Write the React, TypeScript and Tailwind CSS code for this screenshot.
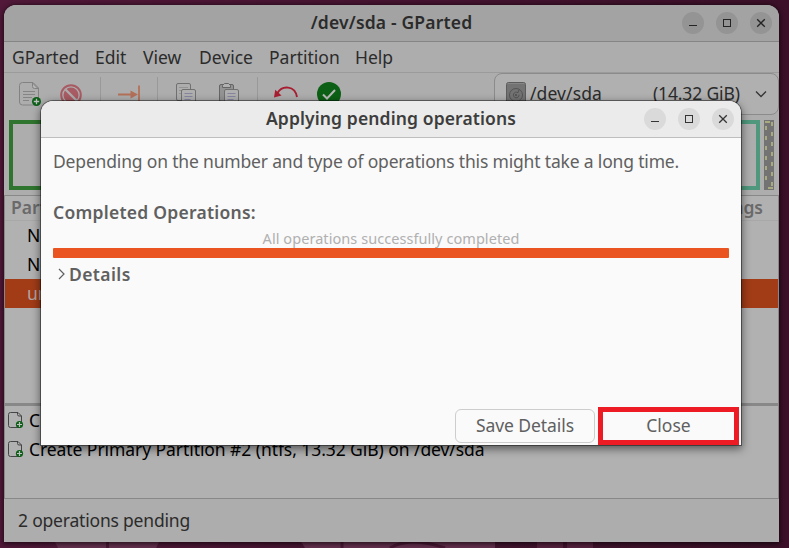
import type { ReactNode } from "react";

function WindowControls({ dim }: { dim?: boolean }) {
  const circle = `flex h-[22px] w-[22px] items-center justify-center rounded-full ${dim ? "bg-[#949494]" : "bg-[#dadada]"}`;
  const stroke = dim ? "#242424" : "#343434";
  return (
    <div className="flex gap-3">
      <div className={circle}>
        <svg width="10" height="10" viewBox="0 0 10 10" shapeRendering="crispEdges">
          <path d="M1 7.5h8" stroke={stroke} />
        </svg>
      </div>
      <div className={circle}>
        <svg width="10" height="10" viewBox="0 0 10 10" shapeRendering="crispEdges">
          <rect x="1.5" y="1.5" width="7" height="7" fill="none" stroke={stroke} />
        </svg>
      </div>
      <div className={circle}>
        <svg width="10" height="10" viewBox="0 0 10 10">
          <path d="M1.2 1.2l7.6 7.6M8.8 1.2L1.2 8.8" stroke={stroke} strokeWidth="1.3" />
        </svg>
      </div>
    </div>
  );
}

function NewIcon() {
  return (
    <svg width="24" height="26" viewBox="0 0 24 26" fill="none">
      <path d="M3.5.5H14l5.500 5.500V20a3 3 0 0 1-3 3h-13a3 3 0 0 1-3-3V3.500a3 3 0 0 1 3-3z" stroke="#828282" />
      <path d="M13.500 1v3.500a2 2 0 0 0 2 2H19z" fill="#b5b5b5" stroke="#828282" />
      <path d="M4 9.500h12M4 12.500h12M4 15.500h9M4 18.500h6" stroke="#858585" />
      <circle cx="17.500" cy="19.500" r="4.500" fill="#0c5f17" />
      <path d="M14.800 19.500h5.400M17.500 16.800v5.400" stroke="#c0c0c0" strokeWidth="1.300" />
    </svg>
  );
}

function SmallNewIcon() {
  return (
    <svg width="16" height="17" viewBox="0 0 16 17" fill="none" className="shrink-0">
      <path d="M2.500.5H10l3.500 3.500V13.500a2 2 0 0 1-2 2h-9a2 2 0 0 1-2-2v-11a2 2 0 0 1 2-2z" stroke="#454545" />
      <path d="M9.500.5v2a1.500 1.500 0 0 0 1.500 1.500h2.500" stroke="#454545" />
      <circle cx="11.500" cy="12.500" r="3.600" fill="#0c5f17" />
      <path d="M9 12.500h5M11.500 10v5" stroke="#c0c0c0" strokeWidth="1.200" />
    </svg>
  );
}

function DeleteIcon() {
  return (
    <svg width="22" height="22" viewBox="0 0 22 22" fill="none">
      <circle cx="11" cy="11" r="9.800" stroke="#a95b63" strokeWidth="2" />
      <circle cx="11" cy="11" r="7.500" fill="#a95b63" />
      <path d="M5.500 5.500l11 11" stroke="#adadad" strokeWidth="2.300" />
    </svg>
  );
}

function ResizeIcon() {
  return (
    <svg width="22" height="18" viewBox="0 0 22 18" fill="none">
      <path d="M0 9.500h14M21 .5v17" stroke="#b37059" strokeWidth="1.800" />
      <path d="M12.500 5.500l7.500 4-7.500 4z" fill="#b37059" />
    </svg>
  );
}

function CopyIcon() {
  return (
    <svg width="20" height="22" viewBox="0 0 20 22" fill="none">
      <rect x=".5" y=".5" width="14" height="17" rx="1.500" stroke="#707070" />
      <path d="M3 4.500h9M3 7.500h9M3 10.500h5" stroke="#949494" />
      <rect x="5.500" y="6.500" width="14" height="15" rx="1.500" fill="#afafaf" stroke="#707070" />
      <path d="M8.500 10.500h8M8.500 13.500h8M8.500 16.500h6" stroke="#8585a0" />
    </svg>
  );
}

function PasteIcon() {
  return (
    <svg width="20" height="22" viewBox="0 0 20 22" fill="none">
      <rect x=".5" y="1.500" width="14" height="17" rx="1.500" fill="#939393" stroke="#656565" />
      <path d="M3.500 4.500v-2l2-2h4l2 2v2z" fill="#b0b0b0" stroke="#656565" />
      <rect x="5.500" y="6.500" width="14" height="15" rx="1.500" fill="#afafaf" stroke="#707070" />
      <path d="M8.500 10.500h8M8.500 13.500h8M8.500 16.500h6" stroke="#8585a0" />
    </svg>
  );
}

function UndoIcon() {
  return (
    <svg width="25" height="13" viewBox="0 0 25 13" fill="none">
      <path d="M3.500 7C8-1 21-.8 23 11" stroke="#a91d31" strokeWidth="1.900" />
      <path d="M0 11.500L1.200 3.800 7.500 9.500z" fill="#a91d31" />
    </svg>
  );
}

function ApplyIcon() {
  return (
    <svg width="24" height="24" viewBox="0 0 24 24" fill="none">
      <circle cx="12" cy="12" r="12" fill="#0c6015" />
      <path d="M6 12.500l4 4 8-8.500" stroke="#b8b8b8" strokeWidth="2" />
    </svg>
  );
}

function DiskIcon() {
  return (
    <svg width="20" height="24" viewBox="0 0 20 24" fill="none">
      <rect x=".5" y=".5" width="19" height="23" rx="2" fill="#737373" stroke="#5c5c5c" />
      <path d="M1.500 1.500h17" stroke="#858585" />
      <circle cx="10" cy="13" r="6.500" stroke="#545454" />
      <path d="M13 7.500l-1 3.300a2.800 2.800 0 1 0 1 1.800" stroke="#545454" />
      <circle cx="10" cy="13" r="1" fill="#4c4c4c" />
    </svg>
  );
}

const Separator = () => <div className="h-9 w-px bg-[#999999]" />;

function PartitionRow({ children }: { children: ReactNode }) {
  return <div className="flex h-[29px] items-center pb-[2px] pl-[22px] text-[17.5px] leading-5 text-black">{children}</div>;
}

function PendingRow({ children }: { children: ReactNode }) {
  return (
    <div className="flex h-[29px] items-center gap-[5px] pl-[3px] text-black">
      <SmallNewIcon />
      <span className="whitespace-nowrap text-[17.5px] tracking-[-0.07px]">{children}</span>
    </div>
  );
}

function MainWindow() {
  return (
    <div className="flex h-[537px] w-[775px] flex-col overflow-hidden rounded-t-[12px] bg-[#adadad] text-[#2b2b2b] shadow-[0_1px_5px_1px_rgba(0,0,0,0.6)]">
      <header className="grid h-[37px] shrink-0 grid-cols-[1fr_auto_1fr] items-center border-b border-[#858585] bg-[#a3a3a3]">
        <div />
        <h1 className="pb-px text-[17.5px] font-semibold tracking-[0.17px]">/dev/sda - GParted</h1>
        <div className="flex justify-end pr-[7px]"><WindowControls dim /></div>
      </header>
      <nav className="flex h-[31px] shrink-0 items-center border-b border-[#9b9b9b] pl-2 text-[17.5px]">
        <span className="w-[83px]">GParted</span>
        <span className="w-[48px]">Edit</span>
        <span className="w-[56px]">View</span>
        <span className="w-[70px]">Device</span>
        <span className="w-[86px]">Partition</span>
        <span>Help</span>
      </nav>
      <div className="flex h-[42px] shrink-0">
        <div className="flex flex-1 items-start pl-[15px] pt-1">
          <div className="w-[41px] pt-[5px]"><NewIcon /></div>
          <div className="w-[40px] pt-[7px]"><DeleteIcon /></div>
          <Separator />
          <div className="w-[56px] pl-[17px] pt-2"><ResizeIcon /></div>
          <Separator />
          <div className="w-[61px] pl-[18px] pt-[6px]"><CopyIcon /></div>
          <div className="w-[38px] pt-[6px]"><PasteIcon /></div>
          <Separator />
          <div className="w-[59px] pl-4 pt-[9px]"><UndoIcon /></div>
          <div className="pt-[5px]"><ApplyIcon /></div>
        </div>
        <div className="flex w-[285px] items-center rounded-lg border border-[#8b8b8b] bg-[#b0b0b0] pl-[11px] pr-[11px] text-[17.5px]">
          <DiskIcon />
          <span className="w-[127px] pb-[2px] pl-1 tracking-[0.1px]">/dev/sda</span>
          <span className="flex-1 whitespace-nowrap pb-[2px] tracking-[-0.15px]">(14.32 GiB)</span>
          <svg width="12" height="8" viewBox="0 0 12 8" fill="none"><path d="M1 1.500l5 5 5-5" stroke="#343434" strokeWidth="1.300" /></svg>
        </div>
      </div>
      <div className="flex h-[80px] shrink-0 gap-1 px-[5px] py-[5px]">
        <div className="w-[55px] border-4 border-[#2f752f]" />
        <div className="flex-1 border-4 border-[#4f987e]" />
        <svg width="10" height="70" viewBox="0 0 10 70" shapeRendering="crispEdges">
          <rect width="10" height="70" fill="#737373" />
          <path d="M2 6V66M8 2V66" stroke="#aaaa7f" strokeWidth="2" strokeDasharray="4 6" />
          <path d="M1 1.500h5M4 68h5" stroke="#aaaa7f" strokeWidth="2" />
        </svg>
      </div>
      <section className="flex h-[208px] shrink-0 flex-col border border-b-0 border-[#888888] bg-[#b1b1b1]">
        <div className="flex h-[25px] items-center justify-between border-b border-[#a8a8a8] pb-[2px] pl-[6px] pr-[15px] text-[17.5px] font-semibold leading-5 text-[#6a6a6a]">
          <span>Partition</span>
          <span>Flags</span>
        </div>
        <PartitionRow>New Partition #1</PartitionRow>
        <PartitionRow>New Partition #2</PartitionRow>
        <div className="flex h-[29px] items-center bg-[#a23c17] pb-px pl-[22px] text-[17.5px] leading-5 text-[#b3a5a0]">unallocated</div>
      </section>
      <section className="h-[96px] shrink-0 border border-t-[3px] border-[#888888] bg-[#b1b1b1]">
        <PendingRow>Create Primary Partition #1 (ntfs, 1.00 GiB) on /dev/sda</PendingRow>
        <PendingRow>Create Primary Partition #2 (ntfs, 13.32 GiB) on /dev/sda</PendingRow>
      </section>
      <footer className="flex flex-1 items-center pl-[14px] text-[17.5px] tracking-[-0.2px]">2 operations pending</footer>
    </div>
  );
}

function Dialog() {
  return (
    <div className="absolute left-[41px] top-[101px] flex h-[344px] w-[700px] flex-col rounded-t-[12px] bg-[#fafafa] text-[#606060] shadow-[0_0_0_1px_rgba(0,0,0,0.42),0_3px_9px_1px_rgba(0,0,0,0.5)]">
      <header className="grid h-[37px] grid-cols-[1fr_auto_1fr] items-center rounded-t-[12px] border-b border-[#bebebe] bg-[#ebebeb]">
        <div />
        <h2 className="pb-[2px] text-[17.5px] font-semibold tracking-[0.12px] text-[#3d3d3d]">Applying pending operations</h2>
        <div className="flex justify-end pr-[7px]"><WindowControls /></div>
      </header>
      <main className="flex flex-1 flex-col px-3 pt-[11px]">
        <p className="whitespace-nowrap text-[17.5px] leading-6 tracking-[-0.175px]">Depending on the number and type of operations this might take a long time.</p>
        <p className="mt-[27px] text-[17.5px] font-semibold leading-6 tracking-[0.25px]">Completed Operations:</p>
        <p className="mt-1 text-center text-[14.5px] leading-5 tracking-[0.06px] text-[#b0b0b0]">All operations successfully completed</p>
        <div className="h-[10px] rounded-[1px] bg-[#e95420]" />
        <div className="mt-1 flex items-center gap-1 pl-[5px] text-[17.5px] font-semibold leading-6 tracking-[0.4px]">
          <svg width="7" height="12" viewBox="0 0 7 12" fill="none"><path d="M1 1l5 5-5 5" stroke="#606060" strokeWidth="1.200" /></svg>
          Details
        </div>
      </main>
      <footer className="flex items-end justify-end gap-[3px] pr-[2px] text-[17.5px]">
        <button className="mb-[2px] h-[34px] w-[140px] rounded-md border border-[#cdcdcd] pb-[2px] tracking-[-0.08px]">Save Details</button>
        <button className="h-[38px] w-[141px] border-[5px] border-[#ed1c24] pb-[2px]">Close</button>
      </footer>
    </div>
  );
}

export default function App() {
  return (
    <div className="relative h-[548px] w-[789px] overflow-hidden bg-linear-to-r from-[#511839] to-[#3b1028] font-['Noto_Sans',sans-serif]">
      <svg className="absolute left-0 top-0" width="789" height="548" viewBox="0 0 789 548" fill="none">
        <path d="M54 540h106l-4 8H58zM300 540h195v8H305z" fill="#64304e" />
        <path d="M107.500 540v8M342 540v8M390 548q20-12 55 0" stroke="#4a1734" strokeWidth="3" />
        <path d="M537 540h26v8h-26zM567 540h26v8h-26z" fill="#572240" />
      </svg>
      <div className="relative pl-1 pt-[5px]"><MainWindow /></div>
      <Dialog />
    </div>
  );
}
